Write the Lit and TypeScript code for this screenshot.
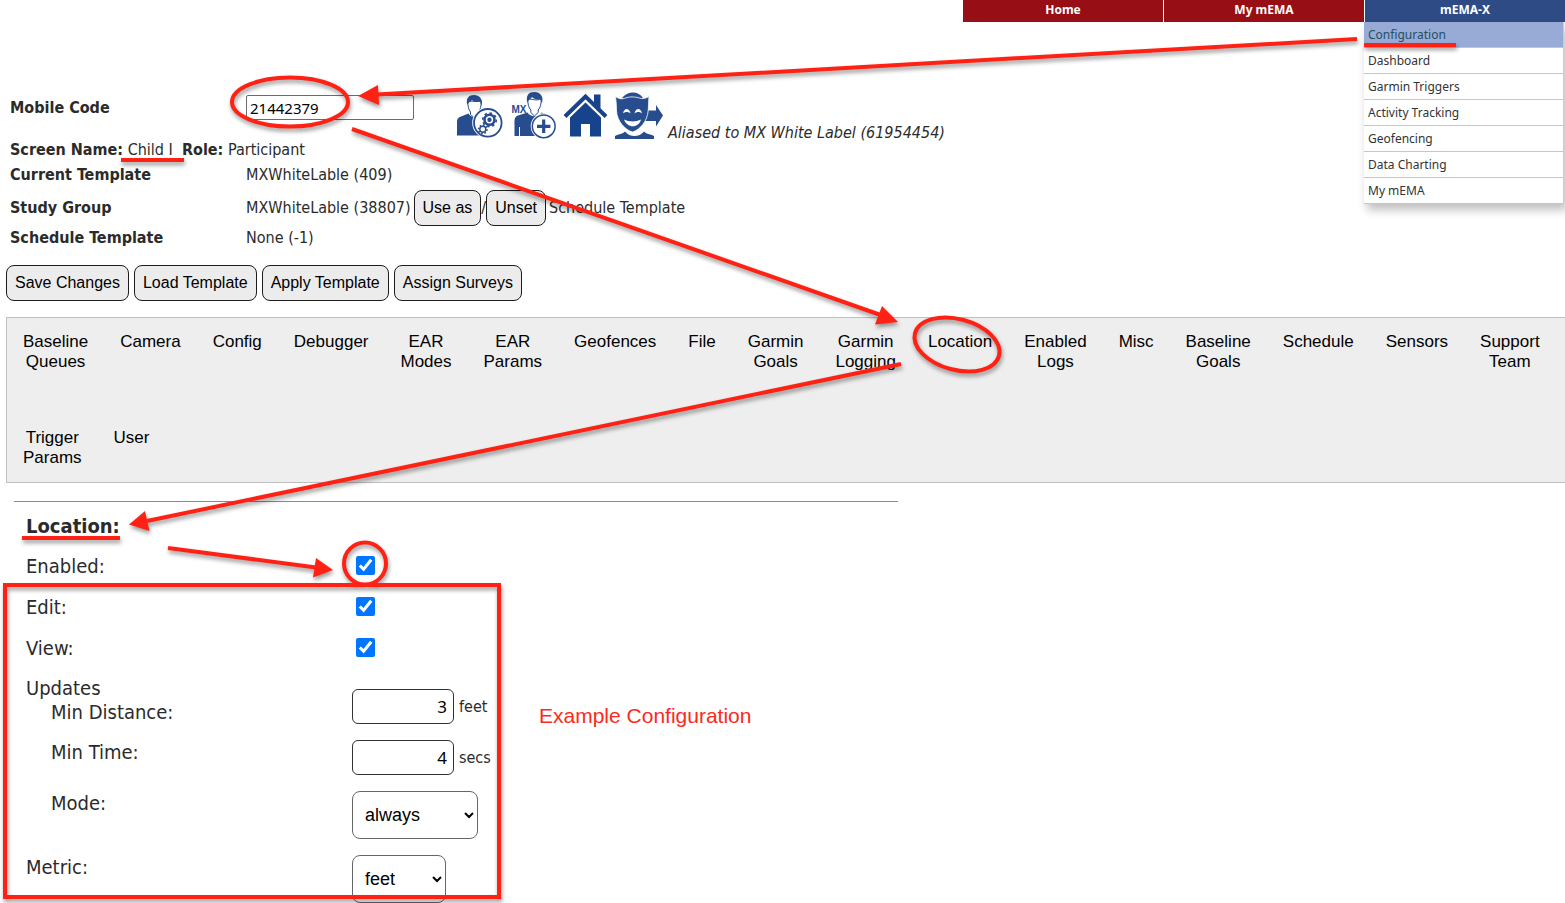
import { LitElement, html, css, svg } from "lit";
import { customElement } from "lit/decorators.js";

const MENU = ["Configuration", "Dashboard", "Garmin Triggers", "Activity Tracking", "Geofencing", "Data Charting", "My mEMA"];

const TABS = [
  "Baseline Queues", "Camera", "Config", "Debugger", "EAR Modes", "EAR Params", "Geofences", "File",
  "Garmin Goals", "Garmin Logging", "Location", "Enabled Logs", "Misc", "Baseline Goals", "Schedule",
  "Sensors", "Support Team", "Trigger Params", "User",
];

// Ring with eight teeth, used inside the user settings icon.
const gear = (cx: number, cy: number, r: number, w: number) => svg`
  <circle cx=${cx} cy=${cy} r=${r} fill="none" stroke="#274d8e" stroke-width=${w}></circle>
  <circle cx=${cx} cy=${cy} r=${r + w / 2 + 0.5} fill="none" stroke="#274d8e" stroke-width="1.6"
    pathLength="16" stroke-dasharray="1 1"></circle>`;

const userSettingsIcon = html`
  <svg viewBox="0 0 48 48" width="48" height="48" aria-hidden="true">
    <path fill="#274d8e" d="M1 43.500V30c0-3 1-4.500 4-5.500l7.500-3c3 5 9 5 12 0l5.500 3v19z"></path>
    <path fill="#fff" stroke="#274d8e" stroke-width="1" d="M11.800 9c0 5 .7 8.500 2.700 11v2.500c2 3 6 3 8 0V20c2-2.500 2.700-6 2.700-11-4 1-8 0-13.400 0z"></path>
    <path fill="#274d8e" d="M11.300 13C9.500 6 13 3 18 3s9.500 4 7.500 10.500c-1-1.500-1-3-1.500-4-4 .8-6.500 0-8-1.500-.8 1.500-3.500 2-4.700 5z"></path>
    <circle cx="31.800" cy="30.800" r="15.600" fill="#fff"></circle>
    <circle cx="31.800" cy="30.800" r="13.800" fill="#fff" stroke="#274d8e" stroke-width="1.800"></circle>
    ${gear(33.500, 27.800, 5, 2.600)}
    <circle cx="33.500" cy="27.800" r="2.200" fill="#274d8e"></circle>
    ${gear(26.800, 37.300, 3, 1.400)}
  </svg>`;

const userAddIcon = html`
  <svg viewBox="0 0 48 48" width="48" height="48" aria-hidden="true">
    <text x="2.500" y="20.500" font-family="Liberation Sans Narrow, Liberation Sans, sans-serif" font-size="10" font-weight="700"
      fill="#274d8e">MX</text>
    <path fill="#274d8e" d="M5.500 44V29c0-3 1-4.500 3.500-5.500l9.500-3c3 5 11 5 14 0l9.500 3.500v20z"></path>
    <path fill="none" stroke="#fff" stroke-width="1" d="M10.500 44v-9"></path>
    <path fill="#fff" stroke="#274d8e" stroke-width="1" d="M18.800 7c0 5 .7 8.500 3 11v2.500l3.700 3.500 3.700-3.500V18c2.300-2.500 3-6 3-11-5 2-9 0-13.400 0z"></path>
    <path fill="#274d8e" d="M18.300 11C16.500 3 20 0 25.500 0s9.500 4 7.500 11c-1-1-1-2.500-1.500-4-3 1-7 0-8.500-2-1 2-3.500 2.500-4.700 6z"></path>
    <circle cx="34.700" cy="34.300" r="13" fill="#fff"></circle>
    <circle cx="34.700" cy="34.300" r="11.400" fill="#fff" stroke="#274d8e" stroke-width="1.500"></circle>
    <path fill="none" stroke="#274d8e" stroke-width="3.200" d="M28 34.300h13.400M34.700 27.600v13.400"></path>
  </svg>`;

const homeIcon = html`
  <svg viewBox="0 0 48 48" width="48" height="48" aria-hidden="true">
    <path fill="#17428c" d="M32 2.500h6.500V17L32 11z"></path>
    <path fill="none" stroke="#17428c" stroke-width="4" d="M3 24.500 23.500 4.500 44 24.500"></path>
    <path fill="#17428c" d="M23.500 10.500 39 25.500v19H28V32h-9v12.500H8v-19z"></path>
  </svg>`;

const aliasIcon = html`
  <svg viewBox="0 0 48 48" width="48" height="48" aria-hidden="true">
    <path fill="#274d8e" d="M7 6C12-1.500 24-1.500 28 6l-5 2H12z"></path>
    <path fill="#274d8e" d="M30 18.500h11V13l7 10.500-7 11V29H30z"></path>
    <path fill="#274d8e" d="M0 47v-3c4-2 8-2 10-4.500 5 6 14 6 19 0 2 2.500 6 2.500 10 4.500v3z"></path>
    <path fill="#274d8e" stroke="#fff" stroke-width=".8" d="M.5 4.500c4 3 7 2.500 10 1.500 4-1.500 9-1.500 14 0 3 1 6 .5 9.500-1.500-.5 7-.5 9-.8 14C32.500 29 25 38 17.500 40 10 38 2 29 1.500 19 1.500 12 1 9 .5 4.500z"></path>
    <path fill="#fff" d="M8 21.500c1-6 6.500-6 7.500 0-2-2-5.500-2-7.500 0zM19.500 21.500c1-6 6.500-6 7.500 0-2-2-5.500-2-7.500 0z"></path>
    <path fill="#fff" d="M9 27.500c5 2.500 12 2.500 17 0-2 9-14 9-17 0z"></path>
  </svg>`;

@customElement("app-root")
export class AppRoot extends LitElement {
  static styles = css`
    :host {
      display: block;
      position: relative;
      overflow: hidden;
      min-height: 100vh;
      background: #fff;
      color: #2b2b2b;
      font: 16px/18px "DejaVu Sans Condensed", "Noto Sans", sans-serif;
      --ui: "Noto Sans", sans-serif;
    }
    * { box-sizing: border-box; }
    button { font: 16px/18px "Liberation Sans", Arial, sans-serif; color: #000; cursor: pointer; }

    .nav { display: flex; justify-content: flex-end; gap: 1px; height: 22px; font: 700 12px/20px var(--ui); }
    .nav-item { position: relative; width: 200px; background: #970f14; }
    .nav-item.active { background: #2f4b86; }
    .nav-link { display: block; color: #fff; text-align: center; text-decoration: none; }
    .menu {
      position: absolute; top: 22px; left: -1px; right: 1px; margin: 0; padding: 0; list-style: none;
      background: #fff; border-right: 1px solid #ccc; box-shadow: 3px 6px 9px rgba(0, 0, 0, 0.25);
      font: 12px/25px var(--ui);
    }
    .menu-item { border-bottom: 1px solid #c6c6c6; }
    .menu-link { display: block; padding: 0 4px; color: #333; text-decoration: none; }
    .menu-item:first-child { background: #98aad6; }
    .menu-item:first-child .menu-link { color: #235060; }

    .profile { padding: 70px 10px 0; }
    .line { display: grid; grid-template-columns: 236px 1fr; align-items: center; }
    .key { font-weight: 700; }
    .code-line { align-items: start; height: 48px; }
    .code-line .key { line-height: 31px; }
    .code-tools { display: flex; align-items: flex-start; }
    .code-input {
      width: 168px; height: 25px; margin: 3px 42px 0 0; padding: 0 3px; border: 1px solid #6b6b6b;
      border-radius: 2px; background: #fff; color: #000; font: 15px/20px var(--ui);
    }
    .icons { display: flex; gap: 5px; }
    .icon-link { display: block; width: 48px; height: 48px; }
    .alias { align-self: flex-end; margin-left: 5px; line-height: 14px; font-style: italic; }
    .name-line { line-height: 20px; }
    .template-line { height: 30px; }
    .group-line { height: 36px; }
    .schedule-line { height: 24px; }
    .group-value { display: flex; align-items: center; gap: 3px; }
    .group-buttons { display: flex; align-items: center; }
    .btn { height: 36px; padding: 0 8px; border: 1px solid #1c1c1c; border-radius: 8px; background: #ececec; }
    .actions { display: flex; gap: 5px; padding: 15px 6px 0; }

    .tabs {
      display: flex; flex-wrap: wrap; row-gap: 28px; margin: 16px 0 0 6px;
      border: 1px solid #c0c0c0; border-right: 0; background: #eee;
    }
    .tab {
      padding: 14px 16px; border: 0; background: none; width: min-content; height: 68px;
      display: flex; align-items: flex-start; font-size: 17px; line-height: 20px;
    }
    .tab-text { width: min-content; text-align: center; }

    .rule { width: 884px; max-width: calc(100% - 28px); margin: 18px 14px 0; border: 0; border-top: 1px solid #8c8c8c; }
    .settings { padding: 0 26px; font-size: 20px; line-height: 24px; }
    .title { margin: 12px 0 7px; font-size: 20px; line-height: 24px; font-weight: 700; }
    .row { display: grid; grid-template-columns: 326px 1fr; align-items: start; }
    .row.check { align-items: center; height: 41px; }
    .row.field { margin-bottom: 16px; }
    .row.first { align-items: end; margin-top: 8px; }
    .indent { display: block; padding-left: 25px; }
    .tick { display: block; width: 19px; height: 19px; margin: 0 4px; accent-color: #0075ff; }
    .value { display: flex; align-items: center; gap: 5px; font-size: 16px; line-height: 18px; }
    .number {
      width: 102px; height: 35px; padding: 0 6px; border: 1px solid #333; border-radius: 6px;
      background: #fff; color: #000; text-align: right; font: 17px/20px var(--ui);
    }
    .pick {
      width: 94px; height: 48px; padding: 0 0 0 8px; border: 1px solid #666; border-radius: 8px;
      background: #fff; color: #000; font: 18px/20px "Liberation Sans", Arial, sans-serif;
    }
    .pick.wide { width: 126px; }

    .marks {
      position: absolute; top: 0; left: 0; width: 1565px; height: 903px; pointer-events: none;
      overflow: visible; filter: drop-shadow(1px 3px 2px rgba(0, 0, 0, 0.4));
    }
    .note {
      position: absolute; top: 704px; left: 539px; margin: 0; color: #fc2a1c;
      font: 21px/24px "Liberation Sans", Arial, sans-serif;
    }
  `;

  private check(id: string, label: string) {
    return html`<div class="row check">
      <label for=${id}>${label}</label><input class="tick" type="checkbox" id=${id} checked />
    </div>`;
  }

  private marks() {
    return html`<svg class="marks" viewBox="0 0 1565 903" aria-hidden="true">
      <g fill="none" stroke="#ff2214" stroke-width="4">
        <ellipse cx="290" cy="102" rx="58" ry="24.500"></ellipse>
        <ellipse cx="957" cy="344.500" rx="43.500" ry="25.400" transform="rotate(15 957 344.500)"></ellipse>
        <circle cx="365" cy="563.500" r="21"></circle>
        <rect x="5" y="585" width="494" height="312"></rect>
        <path d="M1357 39 377 94.500M352 129 882 315.500M901 364 147 521M168 548 316 567.500"></path>
        <path d="M121 160h63M1364 45h92M22 538h98"></path>
      </g>
      <path fill="#ff2214" d="M358 96 378 85 379 105zM898 322 882 306 875 324.500zM129 524.500 145 511 149.500 531zM333 570 316 558 313 577.500z"></path>
    </svg>`;
  }

  render() {
    return html`
      <nav class="nav">
        <div class="nav-item"><a class="nav-link" href="#home">Home</a></div>
        <div class="nav-item"><a class="nav-link" href="#mema">My mEMA</a></div>
        <div class="nav-item active">
          <a class="nav-link" href="#memax">mEMA-X</a>
          <ul class="menu">
            ${MENU.map((m) => html`<li class="menu-item"><a class="menu-link" href="#">${m}</a></li>`)}
          </ul>
        </div>
      </nav>

      <main>
        <section class="profile">
          <div class="line code-line">
            <label class="key" for="code">Mobile Code</label>
            <div class="code-tools">
              <input class="code-input" id="code" type="text" value="21442379" />
              <div class="icons">
                <a class="icon-link" href="#" aria-label="User settings">${userSettingsIcon}</a>
                <a class="icon-link" href="#" aria-label="Add user">${userAddIcon}</a>
                <a class="icon-link" href="#" aria-label="Home">${homeIcon}</a>
                <a class="icon-link" href="#" aria-label="Alias">${aliasIcon}</a>
              </div>
              <span class="alias">Aliased to MX White Label (61954454)</span>
            </div>
          </div>
          <div class="name-line"><b>Screen Name:</b> Child I &nbsp;<b>Role:</b> Participant</div>
          <div class="line template-line"><span class="key">Current Template</span><span>MXWhiteLable (409)</span></div>
          <div class="line group-line">
            <span class="key">Study Group</span>
            <div class="group-value">
              <span>MXWhiteLable (38807)</span>
              <span class="group-buttons"><button class="btn">Use as</button>/<button class="btn">Unset</button></span>
              <span>Schedule Template</span>
            </div>
          </div>
          <div class="line schedule-line"><span class="key">Schedule Template</span><span>None (-1)</span></div>
        </section>

        <div class="actions">
          <button class="btn">Save Changes</button>
          <button class="btn">Load Template</button>
          <button class="btn">Apply Template</button>
          <button class="btn">Assign Surveys</button>
        </div>

        <div class="tabs">
          ${TABS.map((t) => html`<button class="tab"><span class="tab-text">${t}</span></button>`)}
        </div>

        <hr class="rule" />

        <section class="settings">
          <h2 class="title">Location:</h2>
          ${this.check("enabled", "Enabled:")} ${this.check("edit", "Edit:")} ${this.check("view", "View:")}
          <div class="row field first">
            <div>Updates<label class="indent" for="distance">Min Distance:</label></div>
            <div class="value"><input class="number" id="distance" type="text" value="3" />feet</div>
          </div>
          <div class="row field">
            <label class="indent" for="time">Min Time:</label>
            <div class="value"><input class="number" id="time" type="text" value="4" />secs</div>
          </div>
          <div class="row field">
            <label class="indent" for="mode">Mode:</label>
            <select class="pick wide" id="mode"><option>always</option></select>
          </div>
          <div class="row">
            <label for="metric">Metric:</label>
            <select class="pick" id="metric"><option>feet</option></select>
          </div>
        </section>
      </main>

      ${this.marks()}
      <p class="note">Example Configuration</p>
    `;
  }
}
